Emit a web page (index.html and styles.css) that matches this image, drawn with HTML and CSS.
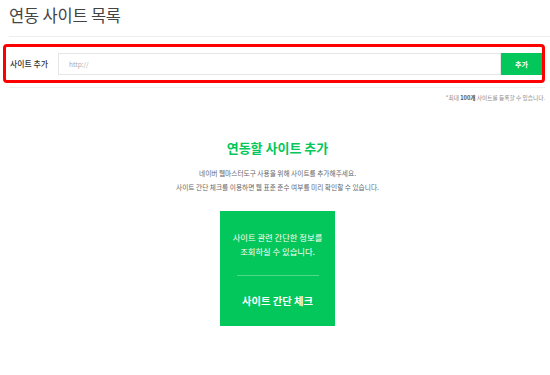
FILE: index.html
```html
<!DOCTYPE html>
<html>
  <head>
    <title>연동 사이트 목록</title>
    <link rel="stylesheet" href="styles.css">
  </head>
  <body>
    <div class="page">
      <h1 class="page-title">연동 사이트 목록</h1>

      <form class="add-box">
        <label class="add-label" for="siteUrl">사이트 추가</label>
        <input type="text" id="siteUrl" name="siteUrl" placeholder="http://" />
        <button type="submit" class="add-button">추가</button>
      </form>

      <p class="note">*최대 <b>100개</b> 사이트를 등록할 수 있습니다.</p>

      <div class="intro">
        <h2>연동할 사이트 추가</h2>
        <p>네이버 웹마스터도구 사용을 위해 사이트를 추가해주세요.</p>
        <p>사이트 간단 체크를 이용하면 웹 표준 준수 여부를 미리 확인할 수 있습니다.</p>

        <div class="check-card">
          <p class="check-desc">사이트 관련 간단한 정보를<br />조회하실 수 있습니다.</p>
          <div class="check-line"></div>
          <div class="check-title">사이트 간단 체크</div>
        </div>
      </div>
    </div>
  </body>
</html>
```

FILE: styles.css
```css
body {
  margin: 0;
  padding: 0;
  font-family: "Noto Sans CJK KR", "Noto Sans", sans-serif;
  background-color: #fff;
  color: #333;
}

.page-title {
  margin: 0 0 0 9px;
  padding: 2px 0 8px 0;
  font-size: 16.5px;
  line-height: 26px;
  font-weight: 400;
  letter-spacing: -0.2px;
  color: #444;
  border-bottom: 1px solid #eee;
}

.add-box {
  display: flex;
  align-items: center;
  box-sizing: border-box;
  width: 542px;
  height: 39px;
  margin: 7px 0 4px 3px;
  padding: 0 0 0 4px;
  border: 3px solid #f00;
  border-radius: 4px;
}

.add-label {
  width: 48px;
  font-size: 7.9px;
  font-weight: 500;
  color: #333;
}

.add-box input {
  flex: 1;
  box-sizing: border-box;
  height: 22px;
  margin: 0;
  padding: 0 0 0 10px;
  border: 1px solid #e6e6e6;
  font-family: inherit;
  font-size: 6.5px;
  outline: none;
}

.add-box input::placeholder {
  color: #aaa;
}

.add-button {
  width: 41px;
  height: 22px;
  margin: 0;
  padding: 0;
  border: none;
  background-color: #03c75a;
  color: #fff;
  font-family: inherit;
  font-size: 7px;
  font-weight: 700;
  cursor: pointer;
}

.note {
  margin: 0 5px 0 9px;
  padding-top: 6px;
  border-top: 1px solid #f0f0f0;
  text-align: right;
  font-size: 5.7px;
  line-height: 8px;
  color: #888;
}

.note b {
  color: #555;
}

.intro {
  padding-left: 5px;
  text-align: center;
}

.intro h2 {
  margin: 37px 0 9px;
  font-size: 13px;
  line-height: 18px;
  font-weight: 700;
  color: #03c75a;
}

.intro p {
  margin: 0;
  font-size: 6.7px;
  line-height: 14px;
  color: #666;
}

.check-card {
  box-sizing: border-box;
  width: 115px;
  height: 115px;
  margin: 17px auto 0;
  padding-top: 19px;
  background-color: #03c75a;
}

.intro .check-desc {
  font-size: 8.3px;
  line-height: 14px;
  color: #fff;
}

.check-line {
  width: 82px;
  height: 1px;
  margin: 17px auto 0;
  background-color: rgba(255, 255, 255, 0.3);
}

.check-title {
  margin-top: 17px;
  font-size: 10.3px;
  line-height: 16px;
  font-weight: 700;
  color: #fff;
}
```
